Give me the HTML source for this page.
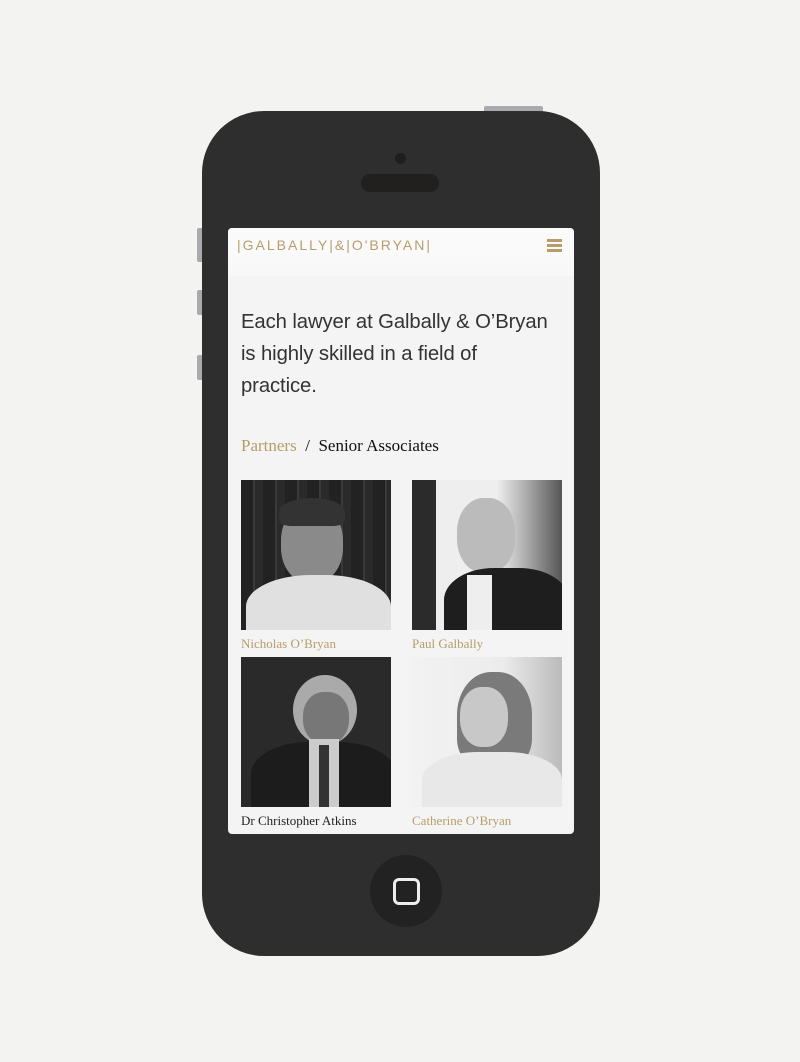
<!DOCTYPE html>
<html><head><meta charset="utf-8"><style>
*{margin:0;padding:0;box-sizing:border-box}
body{width:800px;height:1062px;background:#f3f3f1;position:relative;overflow:hidden;font-family:"Liberation Sans",sans-serif}
.a{position:absolute}
.phone{left:202px;top:111px;width:398px;height:845px;background:#2e2e2e;border-radius:62px}
.btn{background:#a9a9ae}
.screen{left:228px;top:228px;width:346px;height:606px;background:#f4f4f4;border-radius:4px;overflow:hidden}
.hdr{left:0;top:0;width:346px;height:48px;background:linear-gradient(#fbfbfb,#f8f8f8)}
.logo{left:9px;top:9px;font-size:14px;letter-spacing:2px;color:#b79d6a;white-space:nowrap}
.h1{left:13px;top:78px;width:312px;font-size:20.3px;line-height:32px;color:#333;letter-spacing:-0.1px}
.tabs{left:13px;top:208px;font-family:"Liberation Serif",serif;font-size:17px;color:#111;white-space:nowrap}
.ph{width:150px;height:150px;overflow:hidden}
.nm{font-family:"Liberation Serif",serif;font-size:13px;white-space:nowrap}
.gold{color:#b79d6a}
</style></head><body>
<div class="a btn" style="left:484px;top:106px;width:59px;height:8px;border-radius:2px"></div>
<div class="a btn" style="left:197px;top:228px;width:8px;height:34px;border-radius:2px"></div>
<div class="a btn" style="left:197px;top:290px;width:8px;height:25px;border-radius:2px"></div>
<div class="a btn" style="left:197px;top:355px;width:8px;height:25px;border-radius:2px"></div>
<div class="a phone"></div>
<div class="a" style="left:395px;top:153px;width:11px;height:11px;border-radius:50%;background:#1f1d1d"></div>
<div class="a" style="left:361px;top:174px;width:78px;height:18px;border-radius:9px;background:#221f1f"></div>
<div class="a" style="left:370px;top:855px;width:72px;height:72px;border-radius:50%;background:#222"></div>
<div class="a" style="left:393px;top:878px;width:27px;height:27px;border:3px solid #eee;border-radius:6px"></div>

<div class="a screen">
 <div class="a hdr"></div>
 <div class="a logo"><span style="font-weight:100">|</span>GALBALLY<span style="font-weight:100">|</span>&amp;<span style="font-weight:100">|</span>O'BRYAN<span style="font-weight:100">|</span></div>
 <div class="a" style="left:319px;top:11px;width:15px;height:13px;border-top:3px solid #b79d6a;border-bottom:3px solid #b79d6a"><div style="margin-top:2px;height:3px;background:#b79d6a"></div></div>
 <div class="a h1">Each lawyer at Galbally &amp; O’Bryan is highly skilled in a field of practice.</div>
 <div class="a tabs"><span class="gold">Partners</span>&nbsp;&nbsp;/&nbsp;&nbsp;Senior Associates</div>

 <div class="a ph" style="left:13px;top:252px;background:repeating-linear-gradient(90deg,#222 0 12px,#3a3a3a 12px 14px,#2a2a2a 14px 22px)">
  <div class="a" style="left:40px;top:25px;width:62px;height:78px;border-radius:45%;background:#8a8a8a"></div>
  <div class="a" style="left:38px;top:18px;width:66px;height:28px;border-radius:50% 50% 20% 20%;background:#333"></div>
  <div class="a" style="left:5px;top:95px;width:145px;height:70px;border-radius:45% 45% 0 0;background:#e0e0e0"></div>
 </div>
 <div class="a ph" style="left:184px;top:252px;background:linear-gradient(90deg,#2b2b2b 0 24px,#eee 24px 85px,#aaa 115px,#555 150px)">
  <div class="a" style="left:45px;top:18px;width:58px;height:75px;border-radius:45%;background:#bbb"></div>
  <div class="a" style="left:32px;top:88px;width:125px;height:80px;border-radius:40% 40% 0 0;background:#1e1e1e"></div>
  <div class="a" style="left:55px;top:95px;width:25px;height:60px;background:#eee"></div>
 </div>
 <div class="a nm gold" style="left:13px;top:408px">Nicholas O’Bryan</div>
 <div class="a nm gold" style="left:184px;top:408px">Paul Galbally</div>

 <div class="a ph" style="left:13px;top:429px;background:#2a2a2a">
  <div class="a" style="left:52px;top:18px;width:64px;height:70px;border-radius:50%;background:#aaa"></div>
  <div class="a" style="left:62px;top:35px;width:46px;height:52px;border-radius:45%;background:#777"></div>
  <div class="a" style="left:10px;top:85px;width:145px;height:80px;border-radius:40% 40% 0 0;background:#1c1c1c"></div>
  <div class="a" style="left:68px;top:82px;width:30px;height:68px;background:#ccc"></div>
  <div class="a" style="left:78px;top:88px;width:10px;height:62px;background:#333"></div>
 </div>
 <div class="a ph" style="left:184px;top:429px;background:linear-gradient(90deg,#f2f2f2,#ececec 60%,#bbb)">
  <div class="a" style="left:45px;top:15px;width:75px;height:95px;border-radius:45% 45% 30% 30%;background:#7a7a7a"></div>
  <div class="a" style="left:48px;top:30px;width:48px;height:60px;border-radius:45%;background:#c8c8c8"></div>
  <div class="a" style="left:10px;top:95px;width:140px;height:70px;border-radius:40% 40% 0 0;background:#e8e8e8"></div>
 </div>
 <div class="a nm" style="left:13px;top:585px;color:#222">Dr Christopher Atkins</div>
 <div class="a nm gold" style="left:184px;top:585px">Catherine O’Bryan</div>
</div>
</body></html>
